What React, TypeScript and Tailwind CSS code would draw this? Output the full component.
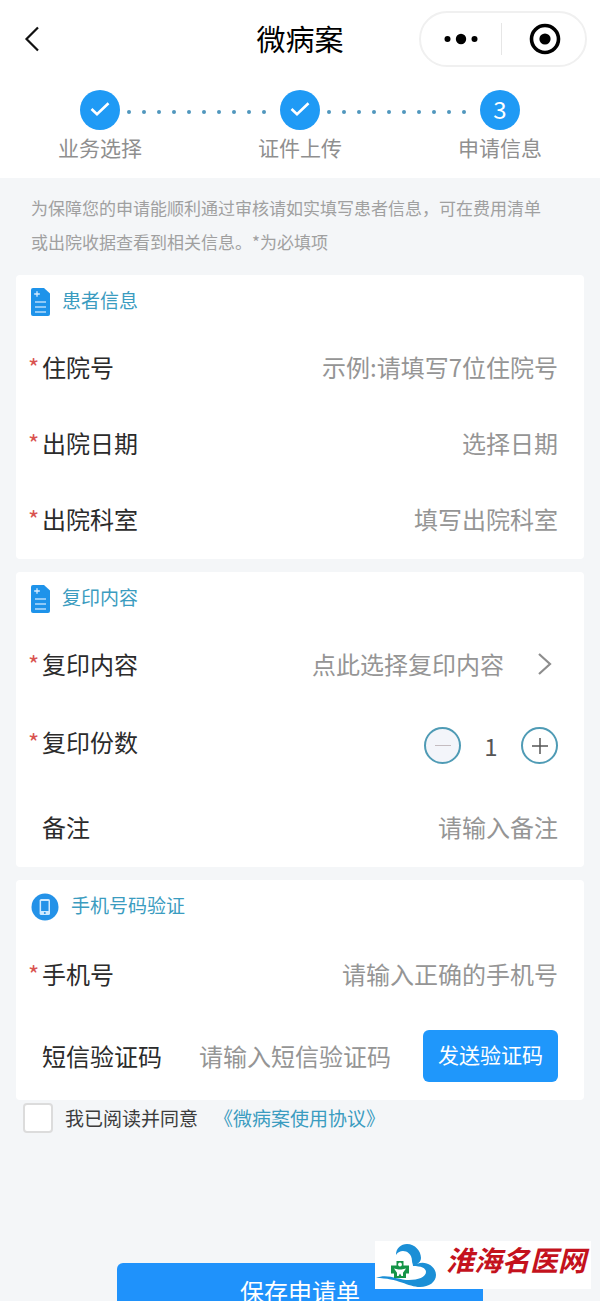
import { useState } from 'react'
import type { ReactNode } from 'react'

const STEPS = ['业务选择', '证件上传', '申请信息']
const CURRENT_STEP = 2

function CheckMark() {
  return (
    <svg viewBox="0 0 20 16" className="h-4 w-5" fill="none" stroke="currentColor" strokeWidth="2.6">
      <path d="M1.5 8 L7 13.3 L18.5 2.2" />
    </svg>
  )
}

function DocumentIcon() {
  return (
    <svg viewBox="0 0 19 28" className="h-7 w-[19px] shrink-0">
      <path d="M2 0H13L19 5.5V26a2 2 0 0 1-2 2H2a2 2 0 0 1-2-2V2A2 2 0 0 1 2 0Z" fill="#1e93ea" />
      <path d="M6 3.2V8.8M3.2 6H8.8" stroke="#d6ecff" strokeWidth="1.3" />
      <path d="M4 14H15M4 19H15M4 24H15" stroke="#b5dcfb" strokeWidth="1.6" />
    </svg>
  )
}

function PhoneIcon() {
  return (
    <svg viewBox="0 0 28 28" className="size-7 shrink-0">
      <circle cx="14" cy="14" r="13.5" fill="#2492e8" />
      <rect x="8.6" y="6" width="10.4" height="16" rx="1.6" fill="#cfe9ff" />
      <rect x="10.1" y="8" width="7.4" height="10" fill="#2492e8" />
      <circle cx="13.8" cy="20" r="1" fill="#2492e8" />
    </svg>
  )
}

function Header() {
  return (
    <header className="relative flex h-[78px] items-center justify-center">
      <button type="button" aria-label="返回" className="absolute left-6 p-0">
        <svg viewBox="0 0 16 26" className="h-[26px] w-4" fill="none" stroke="#111" strokeWidth="2.2">
          <path d="M14 1.5 L2.5 13 L14 24.5" />
        </svg>
      </button>
      <h1 className="pb-0.5 text-[29px] leading-9 text-black">微病案</h1>
      <div className="absolute right-[13px] flex h-14 w-[168px] items-center rounded-full border-2 border-[#f0f0f0]">
        <button type="button" aria-label="更多" className="flex flex-1 justify-center">
          <svg viewBox="0 0 34 12" className="h-3 w-[34px]">
            <circle cx="3.5" cy="6" r="3" />
            <circle cx="17" cy="6" r="5.2" />
            <circle cx="30.5" cy="6" r="3" />
          </svg>
        </button>
        <span className="h-8 w-px bg-[#e6e6e6]" />
        <button type="button" aria-label="关闭" className="flex flex-1 justify-center pl-1">
          <svg viewBox="0 0 32 32" className="size-8">
            <circle cx="16" cy="16" r="13.5" fill="none" stroke="#000" strokeWidth="3.6" />
            <circle cx="16" cy="16" r="5.6" />
          </svg>
        </button>
      </div>
    </header>
  )
}

function Connector() {
  return (
    <div className="flex flex-1 justify-between pt-1 pr-3.5 pl-[7px]">
      {Array.from({ length: 10 }, (_, i) => (
        <span key={i} className="size-1 rounded-full bg-[#5097bd]" />
      ))}
    </div>
  )
}

function Steps() {
  return (
    <div className="pt-3 pb-[17px]">
      <div className="flex items-center px-20">
        {STEPS.map((step, i) => (
          <div key={step} className={i > 0 ? 'flex flex-1 items-center' : 'flex items-center'}>
            {i > 0 && <Connector />}
            <span className="flex size-10 items-center justify-center rounded-full bg-[#1f9af5] pb-0.5 text-2xl text-white">
              {i < CURRENT_STEP ? <CheckMark /> : i + 1}
            </span>
          </div>
        ))}
      </div>
      <ol className="mt-[3px] grid grid-cols-3 text-center text-[21px] leading-7 text-[#8f8f8f]">
        {STEPS.map((step) => (
          <li key={step}>{step}</li>
        ))}
      </ol>
    </div>
  )
}

function Card({ title, icon, children }: { title: string; icon: ReactNode; children: ReactNode }) {
  return (
    <section className="rounded-sm bg-white pr-[26px] pb-0.5 pl-3">
      <h2 className="flex h-[54px] items-center gap-3 pl-[3px] text-[19px] leading-7 text-[#3b9cc0]">
        {icon}
        <span className="pb-1">{title}</span>
      </h2>
      {children}
    </section>
  )
}

interface FieldProps {
  label: string
  htmlFor?: string
  required?: boolean
  height?: string
  labelClass?: string
  children: ReactNode
}

function Field({ label, htmlFor, required, height = 'h-19', labelClass = '', children }: FieldProps) {
  return (
    <div className={`flex items-center ${height}`}>
      <label htmlFor={htmlFor} className={`flex shrink-0 text-2xl text-[#2b2b2b] ${labelClass}`}>
        <span className="w-3.5 text-[#d9534f]">{required && '*'}</span>
        {label}
      </label>
      {children}
    </div>
  )
}

const inputClass =
  'min-w-0 flex-1 bg-transparent text-right text-2xl text-[#333] outline-none placeholder:text-[#959595]'

function Watermark() {
  return (
    <div className="absolute right-[9px] bottom-3 flex h-12 w-[216px] items-center bg-white">
      <svg viewBox="0 0 62 46" className="ml-px h-[46px] w-[62px] shrink-0">
        <path d="M20 13C20 6 25 2 31 2c8 0 14 7 14 14 0 3-2 5-4 6 8-4 19 2 19 11 0 7-7 12-16 12-12 0-22-9-44-9 11-5 22 2 33 2 9 0 17-3 17-8 0-4-5-6-13-6 0-2-1-3-1-5 0-7-5-10-9-10-3 0-5 1-7 4Z" fill="#1b8fd6" />
        <path d="M20.500 19h7v4.500H33v8h-3V36H18v-4.500h-3v-8h5.500Z" fill="#159447" />
        <circle cx="24" cy="22.500" r="1.900" fill="#fff" />
        <path d="M18 26.500l4.500 1h3l4.500-1-3 4.200V34h-1.500L24 31.500 22.500 34H21v-3.300Z" fill="#fff" />
      </svg>
      <span className="ml-2 pb-3 text-[28px] leading-8 font-bold whitespace-nowrap text-[#c4121d] italic">
        淮海名医网
      </span>
    </div>
  )
}

export default function App() {
  const [copies, setCopies] = useState(1)
  const [agreed, setAgreed] = useState(false)

  return (
    <div className="flex min-h-screen flex-col bg-[#f4f6f8] font-['Noto_Sans_CJK_SC',sans-serif]">
      <div className="bg-white">
        <Header />
        <Steps />
      </div>

      <main className="px-4">
        <p className="pt-[13px] pr-7 pb-4 pl-[15px] text-[17px] leading-[34px] text-[#a0a0a0]">
          为保障您的申请能顺利通过审核请如实填写患者信息，可在费用清单或出院收据查看到相关信息。*为必填项
        </p>

        <form id="apply" className="flex flex-col gap-[13px]" onSubmit={(e) => e.preventDefault()}>
          <Card title="患者信息" icon={<DocumentIcon />}>
            <Field label="住院号" htmlFor="admission" required>
              <input id="admission" className={inputClass} placeholder="示例:请填写7位住院号" />
            </Field>
            <Field label="出院日期" htmlFor="date" required>
              <input id="date" className={inputClass} placeholder="选择日期" />
            </Field>
            <Field label="出院科室" htmlFor="department" required>
              <input id="department" className={inputClass} placeholder="填写出院科室" />
            </Field>
          </Card>

          <Card title="复印内容" icon={<DocumentIcon />}>
            <Field label="复印内容" htmlFor="content" required>
              <button
                id="content"
                type="button"
                className="flex flex-1 items-center justify-end gap-8 pr-1.5 text-2xl text-[#959595]"
              >
                点此选择复印内容
                <svg viewBox="0 0 16 24" className="h-6 w-4" fill="none" stroke="#8d8d8d" strokeWidth="2.2">
                  <path d="M3 2 L14 12 L3 22" />
                </svg>
              </button>
            </Field>
            <Field label="复印份数" htmlFor="copies" required height="h-[87px]" labelClass="pb-2">
              <div className="flex flex-1 items-center justify-end">
                <button
                  type="button"
                  aria-label="减少"
                  disabled={copies <= 1}
                  onClick={() => setCopies(copies - 1)}
                  className="flex size-[37px] items-center justify-center rounded-full border-2 border-[#4f9bb5] bg-[#f3f5fa]"
                >
                  <span className="h-px w-4 bg-[#c4bcc0]" />
                </button>
                <input
                  id="copies"
                  readOnly
                  value={copies}
                  className="w-[60px] bg-transparent text-center text-2xl text-[#555] outline-none"
                />
                <button
                  type="button"
                  aria-label="增加"
                  onClick={() => setCopies(copies + 1)}
                  className="flex size-[37px] items-center justify-center rounded-full border-2 border-[#4f9bb5]"
                >
                  <svg viewBox="0 0 16 16" className="size-4" stroke="#555" strokeWidth="1.5">
                    <path d="M8 0V16M0 8H16" />
                  </svg>
                </button>
              </div>
            </Field>
            <Field label="备注" htmlFor="remark">
              <input id="remark" className={inputClass} placeholder="请输入备注" />
            </Field>
          </Card>

          <Card title="手机号码验证" icon={<PhoneIcon />}>
            <Field label="手机号" htmlFor="phone" required height="h-20">
              <input id="phone" type="tel" className={inputClass} placeholder="请输入正确的手机号" />
            </Field>
            <Field label="短信验证码" htmlFor="code" height="h-[84px]">
              <input id="code" className={inputClass} placeholder="请输入短信验证码" />
              <button
                type="button"
                className="ml-8 h-[52px] w-[135px] shrink-0 rounded-md bg-[#1f97fb] pb-0.5 text-[21px] text-white"
              >
                发送验证码
              </button>
            </Field>
          </Card>
        </form>

        <div className="flex items-center pt-[3px] pl-[7px] text-[19px] leading-7">
          <input
            id="agree"
            type="checkbox"
            checked={agreed}
            onChange={(e) => setAgreed(e.target.checked)}
            className="size-[30px] appearance-none rounded-sm border-2 border-[#dcdcdc] bg-white checked:bg-[#1f97fb]"
          />
          <label htmlFor="agree" className="ml-3 text-[#3c3c3c]">
            我已阅读并同意
          </label>
          <a href="#agreement" className="ml-4 text-[#3b9cc0]">
            《微病案使用协议》
          </a>
        </div>
      </main>

      <footer className="relative mt-auto">
        <div className="flex h-[38px] items-start justify-center overflow-hidden">
          <button
            type="submit"
            form="apply"
            className="h-14 w-[61%] shrink-0 rounded-md bg-[#1f92fb] text-2xl text-white"
          >
            保存申请单
          </button>
        </div>
        <Watermark />
      </footer>
    </div>
  )
}
